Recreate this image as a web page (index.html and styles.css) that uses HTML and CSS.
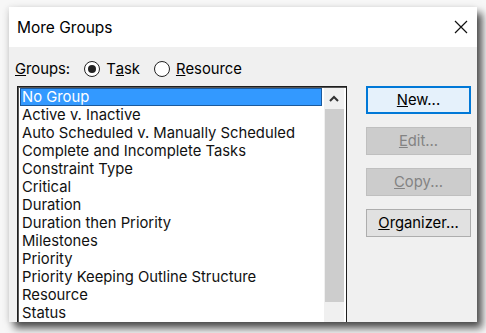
FILE: index.html
```html
<!DOCTYPE html>
<html lang="en">
<head>
    <meta charset="UTF-8">
    <title>More Groups</title>
    <link rel="stylesheet" href="styles.css">
</head>
<body>
    <div class="dialog">
        <div class="titlebar">
            <span class="title">More Groups</span>
            <svg class="close" width="14" height="14" viewBox="0 0 14 14">
                <path d="M1 1L13 13M13 1L1 13" stroke="#111" stroke-width="1.2" fill="none"/>
            </svg>
        </div>

        <div class="content">
            <div class="groups-row">
                <span class="label"><u>G</u>roups:</span>
                <span class="radio"><span class="circle checked"></span>T<u>a</u>sk</span>
                <span class="radio"><span class="circle"></span><u>R</u>esource</span>
            </div>

            <div class="main">
                <div class="listbox">
                    <ul class="items">
                        <li class="selected">No Group</li>
                        <li>Active v. Inactive</li>
                        <li>Auto Scheduled v. Manually Scheduled</li>
                        <li>Complete and Incomplete Tasks</li>
                        <li>Constraint Type</li>
                        <li>Critical</li>
                        <li>Duration</li>
                        <li>Duration then Priority</li>
                        <li>Milestones</li>
                        <li>Priority</li>
                        <li>Priority Keeping Outline Structure</li>
                        <li>Resource</li>
                        <li>Status</li>
                    </ul>
                    <div class="scrollbar">
                        <div class="arrow">
                            <svg width="10" height="7" viewBox="0 0 10 7">
                                <path d="M1 6L5 2L9 6" stroke="#333" stroke-width="2" fill="none"/>
                            </svg>
                        </div>
                        <div class="thumb"></div>
                    </div>
                </div>

                <div class="buttons">
                    <button class="btn default"><u>N</u>ew...</button>
                    <button class="btn disabled"><u>E</u>dit...</button>
                    <button class="btn disabled"><u>C</u>opy...</button>
                    <button class="btn"><u>O</u>rganizer...</button>
                </div>
            </div>
        </div>
    </div>
</body>
</html>
```

FILE: styles.css
```css
* {
    margin: 0;
    padding: 0;
    box-sizing: border-box;
    font-family: Inter, Lato, sans-serif;
}
body {
    background: #f7f7f7;
    padding: 7px 9px 0;
    height: 333px;
    overflow: hidden;
    color: #000;
}
.dialog {
    width: 468px;
    height: 315px;
    background: #f0f0f0;
    box-shadow: 5px 6px 8px rgba(0, 0, 0, 0.7), -2px 0 6px rgba(0, 0, 0, 0.08);
    overflow: hidden;
}
.titlebar {
    height: 40px;
    background: #fff;
    display: flex;
    align-items: center;
    justify-content: space-between;
    padding: 0 9px 0 8px;
}
.title {
    font-size: 15.5px;
}
.close {
    display: block;
}
.content {
    padding: 13px 0 0 6px;
}
.groups-row {
    display: flex;
    align-items: center;
    height: 18px;
    font-size: 14.8px;
}
.label {
    margin-right: 14px;
}
.radio {
    display: flex;
    align-items: center;
    margin-right: 14px;
}
.circle {
    width: 16px;
    height: 16px;
    border: 1px solid #222;
    border-radius: 50%;
    margin-right: 6px;
    background: #fff;
    position: relative;
}
.circle.checked::after {
    content: "";
    position: absolute;
    left: 3px;
    top: 3px;
    width: 8px;
    height: 8px;
    border-radius: 50%;
    background: #222;
}
.main {
    display: flex;
    margin-top: 8px;
    margin-left: 2px;
}
.listbox {
    width: 330px;
    height: 240px;
    border: 1px solid #1e1e1e;
    box-shadow: inset 1px 1px 0 #555;
    background: #fff;
    display: flex;
    padding: 1px 2px 0 2px;
}
.items {
    list-style: none;
    flex: 1;
    font-size: 14.8px;
    color: #111;
}
.items li {
    height: 18px;
    line-height: 18px;
    padding-left: 2px;
    white-space: nowrap;
}
.items li.selected {
    background: #3399ff;
    color: #fff;
    border: 1px solid #1c5a9c;
    line-height: 16px;
    padding-left: 1px;
}
.scrollbar {
    width: 20px;
    margin-left: 2px;
    background: #f0f0f0;
}
.arrow {
    height: 20px;
    display: flex;
    align-items: center;
    justify-content: center;
}
.thumb {
    height: 193px;
    margin: 1px 0 0 1px;
    background: #cdcdcd;
}
.buttons {
    display: flex;
    flex-direction: column;
    gap: 13px;
    margin-left: 19px;
}
.btn {
    width: 105px;
    height: 28px;
    font-size: 14.8px;
    background: #e1e1e1;
    border: 1px solid #adadad;
    color: #000;
}
.btn.default {
    background: #e5f1fb;
    border: 2px solid #0078d7;
}
.btn.disabled {
    background: #cccccc;
    border-color: #bfbfbf;
    color: #838383;
}
```
